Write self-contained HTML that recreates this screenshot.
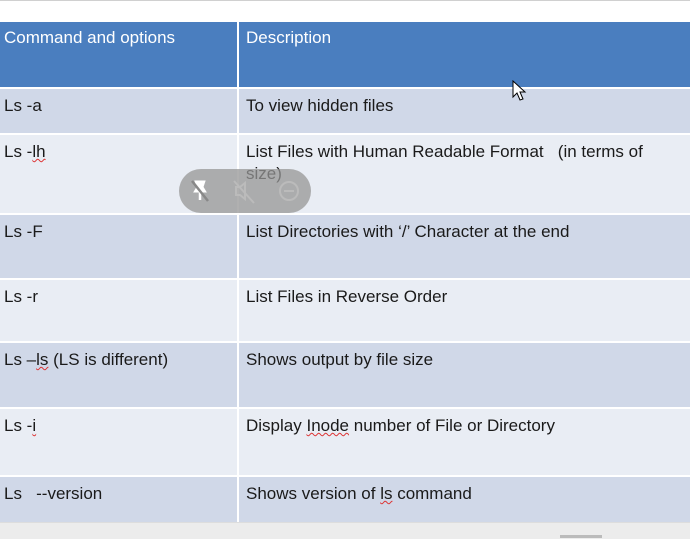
<!DOCTYPE html>
<html><head><style>
body{margin:0;width:690px;height:538px;background:#fff;position:relative;overflow:hidden;font-family:"Liberation Sans",sans-serif;font-size:17px;color:#1a1a1a}
.top{position:absolute;left:0;top:0;width:690px;height:1px;background:#d0d0d0}
.r{position:absolute;left:0;width:690px;box-sizing:border-box;border-bottom:2px solid #fff}
.c{position:absolute;top:7px;white-space:nowrap}
.a{left:4px}.b{left:246px;width:415px;line-height:22px;top:6px;white-space:normal}
.d{background:#d0d8e8}.l{background:#e9edf4}
.v{position:absolute;left:237px;top:22px;width:2px;height:500px;background:#fff}
.u{text-decoration:underline wavy #d33;text-decoration-thickness:1px}
</style></head><body>
<div class="top"></div>
<div class="r" style="top:22px;height:67px;background:#4a7ebf;color:#fff"><span class="c a" style="top:6px">Command and options</span><span class="c b" style="top:5px">Description</span></div>
<div class="r d" style="top:89px;height:46px"><span class="c a">Ls -a</span><span class="c b">To view hidden files</span></div>
<div class="r l" style="top:135px;height:80px"><span class="c a">Ls -<span class="u">lh</span></span><span class="c b">List Files with Human Readable Format &nbsp;&nbsp;(in terms of size)</span></div>
<div class="r d" style="top:215px;height:65px"><span class="c a">Ls -F</span><span class="c b">List Directories with ‘/’ Character at the end</span></div>
<div class="r l" style="top:280px;height:63px"><span class="c a">Ls -r</span><span class="c b">List Files in Reverse Order</span></div>
<div class="r d" style="top:343px;height:66px"><span class="c a">Ls –<span class="u">ls</span> (LS is different)</span><span class="c b">Shows output by file size</span></div>
<div class="r l" style="top:409px;height:68px"><span class="c a">Ls -<span class="u">i</span></span><span class="c b">Display <span class="u">Inode</span> number of File or Directory</span></div>
<div class="r d" style="top:477px;height:45px;border-bottom:none"><span class="c a">Ls &nbsp;&nbsp;--version</span><span class="c b">Shows version of <span class="u">ls</span> command</span></div>
<div style="position:absolute;top:522px;left:0;width:690px;height:16px;background:#ececec;border-top:1px solid #ddd"></div>
<div style="position:absolute;top:535px;left:560px;width:42px;height:3px;background:#bbb"></div>
<div class="v"></div>
<div style="position:absolute;left:179px;top:169px;width:132px;height:44px;border-radius:22px;background:rgba(150,150,150,.75)"></div>
<svg style="position:absolute;left:179px;top:169px" width="132" height="44">
<g stroke="#fff" stroke-width="2.5" fill="#fff"><path d="M16 12h10l-2 6 3 5h-12l3-5z" stroke-width="1"/><path d="M21 23v8"/><path d="M13 12l16 20" stroke="#888"/></g>
<g stroke="#bbb" stroke-width="2" fill="none"><path d="M57 18h4l5-4v16l-5-4h-4z"/><path d="M55 12l20 22"/></g>
<circle cx="110" cy="22" r="9" stroke="#bbb" stroke-width="2" fill="none"/><path d="M105 22h10" stroke="#bbb" stroke-width="2"/>
</svg>
<svg style="position:absolute;left:512px;top:80px" width="16" height="22"><path d="M1 1v16l4-4 3 7 3-1-3-7h5z" fill="#fff" stroke="#000"/></svg>
</body></html>
